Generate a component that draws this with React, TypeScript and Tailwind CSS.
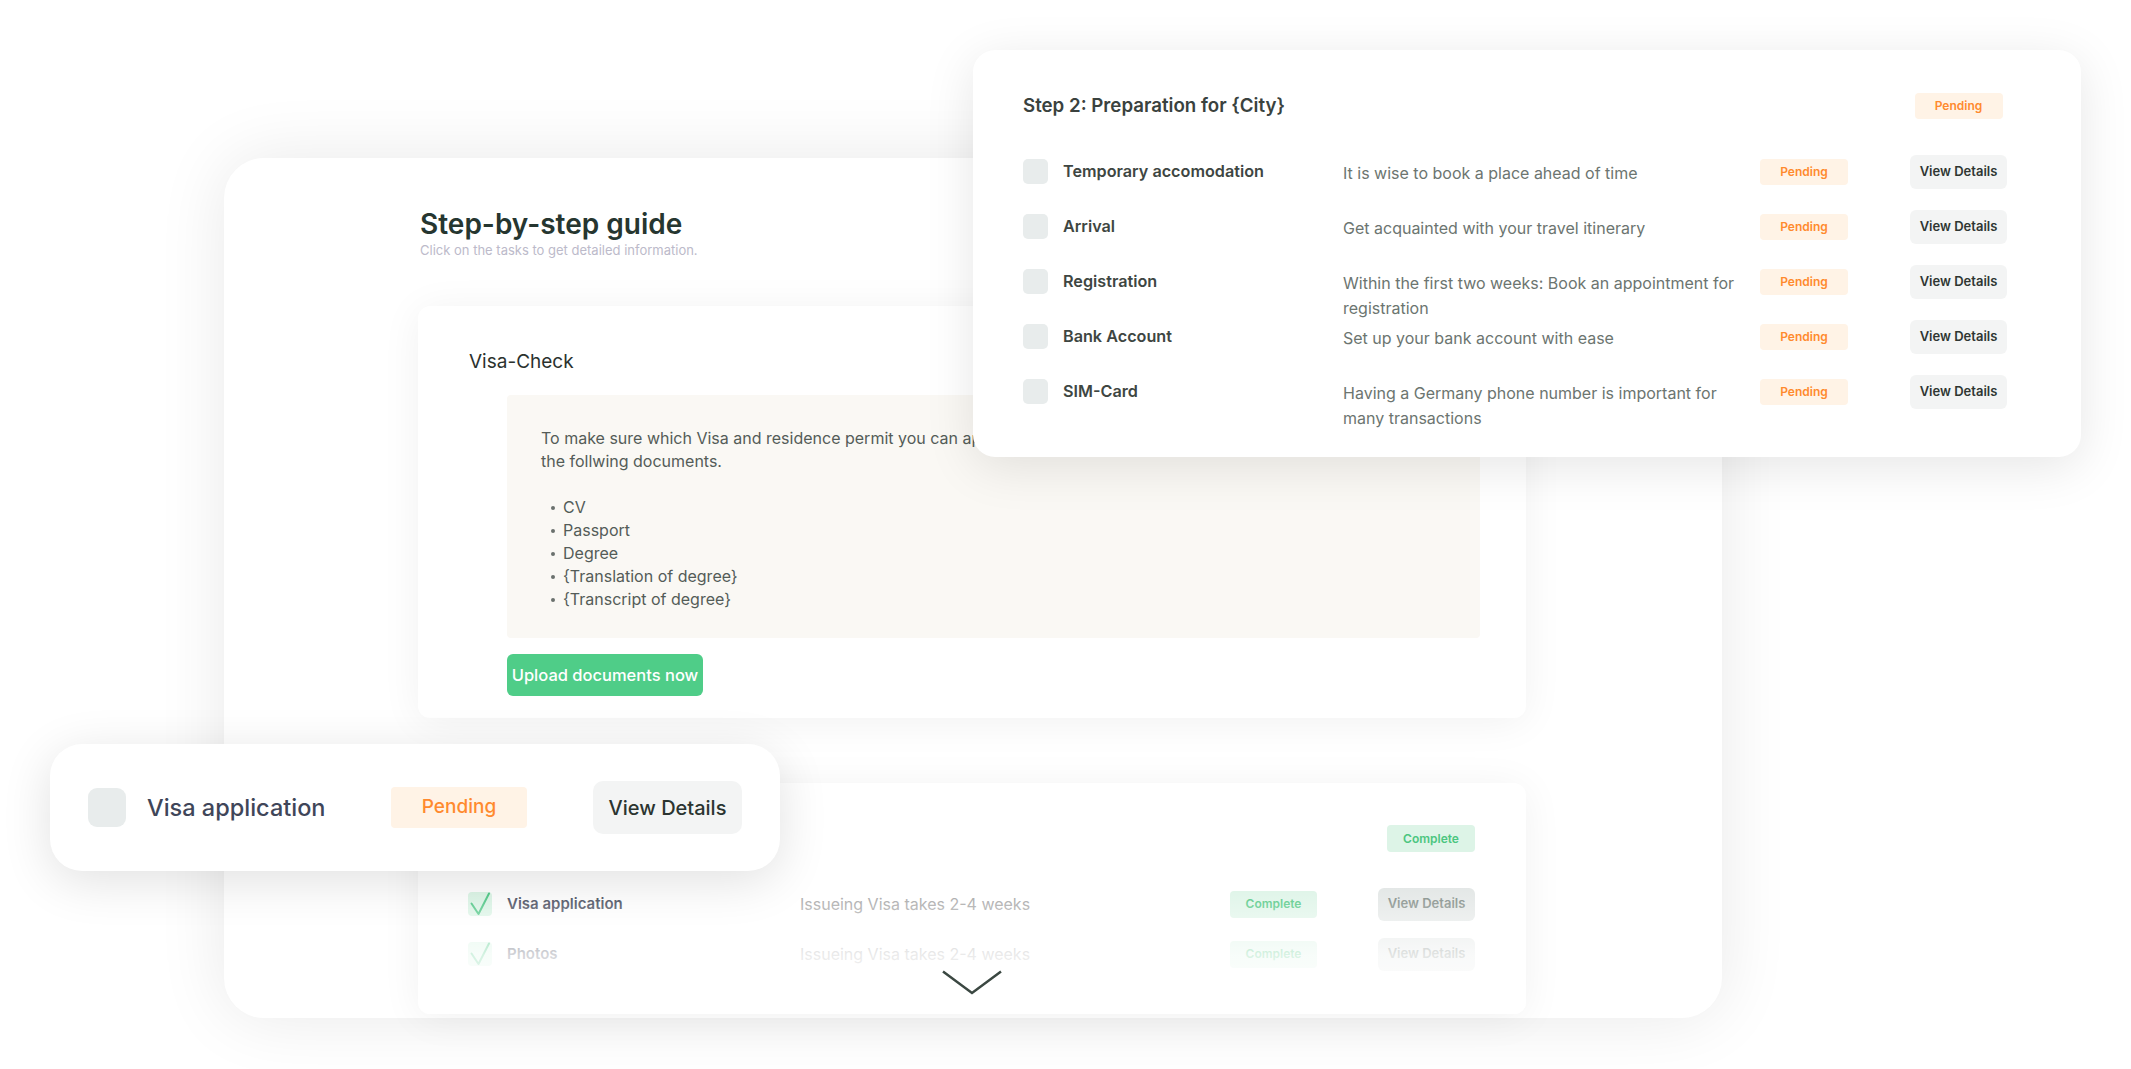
import React from "react";

const rows = [
  { title: "Temporary accomodation", desc: "It is wise to book a place ahead of time" },
  { title: "Arrival", desc: "Get acquainted with your travel itinerary" },
  { title: "Registration", desc: "Within the first two weeks: Book an appointment for registration" },
  { title: "Bank Account", desc: "Set up your bank account with ease" },
  { title: "SIM-Card", desc: "Having a Germany phone number is important for many transactions" },
];

const docs = ["CV", "Passport", "Degree", "{Translation of degree}", "{Transcript of degree}"];

function Check() {
  return (
    <svg width="24" height="24" viewBox="0 0 24 24" fill="none" className="overflow-visible">
      <path d="M3.5 11.5 L10.5 22 L21 1.5" stroke="#3fc47c" strokeWidth="2" strokeLinecap="round" strokeLinejoin="round" />
    </svg>
  );
}

function StepTwoCard() {
  return (
    <div className="absolute left-[973px] top-[50px] w-[1108px] h-[407px] rounded-[22px] bg-white shadow-[0_10px_50px_rgba(0,0,0,0.10)]">
      <div className="mt-[43px] pl-[50px] grid grid-cols-[40px_280px_417px_150px_97px] items-center h-[26px]">
        <div className="col-span-4 text-[18.7px] leading-[26px] font-semibold text-[#3a423e]">
          Step 2: Preparation for {"{City}"}
        </div>
        <div className="justify-self-center w-[88px] h-[26px] rounded-[4px] bg-[#fff3e6] flex items-center justify-center text-[12px] font-semibold text-[#ff8a2e]">
          Pending
        </div>
      </div>
      <div className="mt-[40px] pl-[50px] flex flex-col">
        {rows.map((r) => (
          <div key={r.title} className="h-[55px] grid grid-cols-[40px_280px_417px_150px_97px] items-start">
            <div className="w-[25px] h-[25px] rounded-[5px] bg-[#e8ecec]" />
            <div className="text-[16.2px] leading-[25px] font-semibold text-[#3e4642]">{r.title}</div>
            <div className="mt-[2px] w-[392px] text-[16px] leading-[25px] text-[#6c7570]">{r.desc}</div>
            <div className="w-[88px] h-[26px] rounded-[4px] bg-[#fff3e6] flex items-center justify-center text-[12px] font-semibold text-[#ff8a2e]">
              Pending
            </div>
            <div className="-mt-[4px] w-[97px] h-[34px] rounded-[6px] bg-[#f3f4f4] flex items-center justify-center text-[13px] font-semibold text-[#2f3632]">
              View Details
            </div>
          </div>
        ))}
      </div>
    </div>
  );
}

function VisaCard() {
  return (
    <div className="absolute left-[50px] top-[744px] w-[730px] h-[127px] rounded-[32px] bg-white shadow-[0_10px_50px_rgba(0,0,0,0.12)] flex items-center pl-[38px]">
      <div className="w-[38px] h-[39px] rounded-[9px] bg-[#e8ecec] shrink-0" />
      <div className="ml-[21px] w-[244px] text-[23.5px] font-medium text-[#3f4659] shrink-0">Visa application</div>
      <div className="w-[136px] h-[41px] rounded-[4px] bg-[#fff3e6] flex items-center justify-center text-[19px] font-medium text-[#ff8a2e] shrink-0">
        Pending
      </div>
      <div className="ml-[66px] w-[149px] h-[53px] rounded-[10px] bg-[#f3f4f4] flex items-center justify-center text-[20px] font-medium text-[#2b3430] shrink-0">
        View Details
      </div>
    </div>
  );
}

export default function App() {
  return (
    <div className="relative w-[2131px] h-[1069px] overflow-hidden bg-white font-['Inter',sans-serif]">
      {/* main card */}
      <div className="absolute left-[224px] top-[158px] w-[1498px] h-[860px] rounded-[40px] bg-white shadow-[0_0_70px_rgba(0,0,0,0.09)] pl-[194px] pt-[49px] flex flex-col">
        <h1 className="ml-[2px] text-[28px] leading-[34px] font-semibold text-[#263630]">Step-by-step guide</h1>
        <p className="ml-[2px] mt-[1px] text-[13px] leading-[16px] text-[#bcbaca]">Click on the tasks to get detailed information.</p>

        <div className="mt-[48px] w-[1108px] h-[412px] rounded-[12px] bg-white shadow-[0_4px_40px_rgba(0,0,0,0.06)] flex flex-col pt-[44px]">
          <div className="ml-[51px] text-[19px] leading-[24px] text-[#2b322e]">Visa-Check</div>
          <div className="ml-[89px] mt-[21px] w-[973px] h-[243px] rounded-[4px] bg-[#faf8f4] pl-[34px] pt-[32px] text-[16px] leading-[23px] text-[#545c58]">
            <p>
              To make sure which Visa and residence permit you can apply for, please upload
              <br />
              the follwing documents.
            </p>
            <ul className="mt-[23px] pl-[10px]">
              {docs.map((d) => (
                <li key={d} className="flex items-center">
                  <span className="w-[4px] h-[4px] rounded-full bg-[#6a716d] mr-[8px]" />
                  {d}
                </li>
              ))}
            </ul>
          </div>
          <button className="ml-[89px] mt-[16px] w-[196px] h-[42px] rounded-[6px] bg-[#4fcd88] text-white text-[16.5px] font-medium">
            Upload documents now
          </button>
        </div>

        <div className="relative mt-[65px] w-[1108px] h-[231px] rounded-[12px] bg-white shadow-[0_4px_40px_rgba(0,0,0,0.06)] overflow-hidden">
          <div className="mt-[42px] h-[27px] flex items-center pl-[51px] pr-[51px]">
            <div className="text-[19px] text-[#2b322e]">Step 1: Visa</div>
            <div className="ml-auto w-[88px] h-[27px] rounded-[4px] bg-[#ddf4e7] flex items-center justify-center text-[12px] font-semibold text-[#4cc680]">
              Complete
            </div>
          </div>
          <div className="mt-[27px] pl-[50px] flex flex-col">
            {[
              { t: "Visa application" },
              { t: "Photos" },
            ].map((r) => (
              <div key={r.t} className="h-[50px] grid grid-cols-[39px_293px_430px_148px_97px] items-center">
                <div className="w-[24px] h-[24px] rounded-[4px] bg-[#d9f5e5] flex items-center justify-center">
                  <Check />
                </div>
                <div className="text-[15px] font-semibold text-[#3b4153]">{r.t}</div>
                <div className="text-[16px] text-[#a2a2a2]">Issueing Visa takes 2-4 weeks</div>
                <div className="w-[87px] h-[27px] rounded-[4px] bg-[#ddf4e7] flex items-center justify-center text-[12px] font-semibold text-[#4cc680]">
                  Complete
                </div>
                <div className="w-[97px] h-[33px] rounded-[6px] bg-[#e2e6e5] flex items-center justify-center text-[13px] font-semibold text-[#7c8882]">
                  View Details
                </div>
              </div>
            ))}
          </div>
          <div className="absolute inset-x-0 top-[100px] bottom-0 bg-[linear-gradient(to_bottom,rgba(255,255,255,0)_0%,rgba(255,255,255,0.78)_55%,rgba(255,255,255,0.97)_100%)]" />
          <svg className="absolute left-1/2 -translate-x-1/2 top-[187px]" width="60" height="25" viewBox="0 0 60 25" fill="none">
            <path d="M1 1.5 L30 23 L59 1.5" stroke="#3b4842" strokeWidth="2.5" strokeLinejoin="miter" />
          </svg>
        </div>
      </div>

      <StepTwoCard />
      <VisaCard />
    </div>
  );
}
